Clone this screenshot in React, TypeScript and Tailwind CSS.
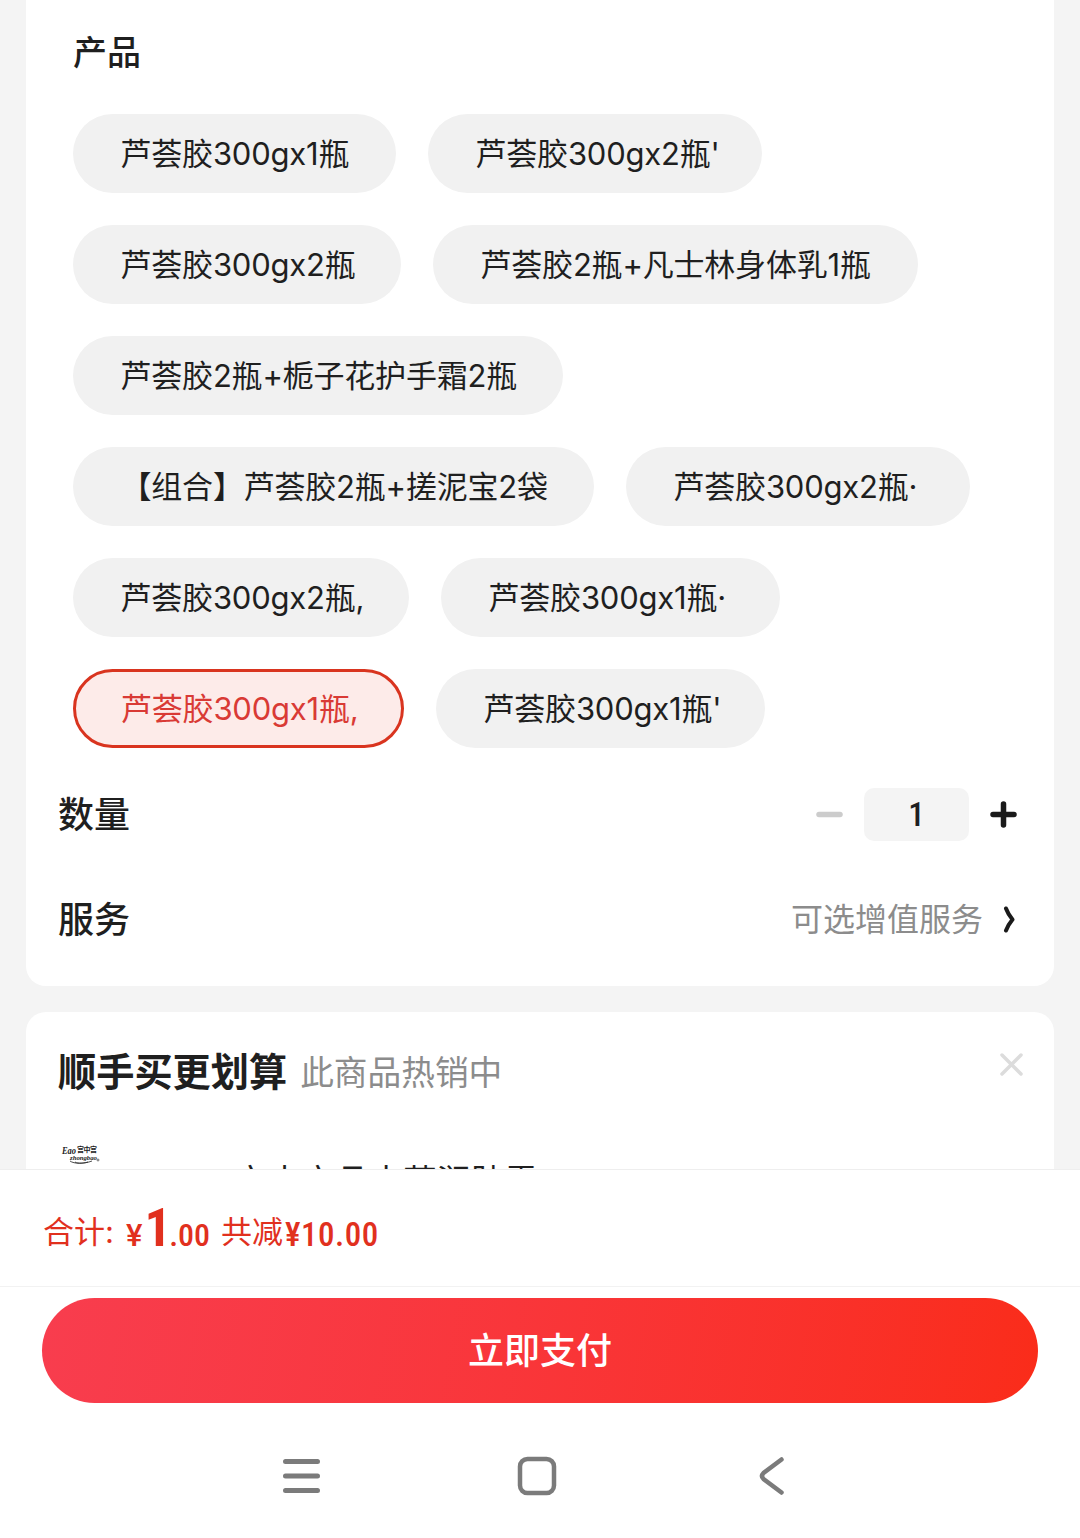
import { useState } from "react";
import { clsx } from "clsx";

type Option = { label: string; width: string };

const rows: Option[][] = [
  [
    { label: "芦荟胶300gx1瓶", width: "w-[323px]" },
    { label: "芦荟胶300gx2瓶'", width: "w-[334px]" },
  ],
  [
    { label: "芦荟胶300gx2瓶", width: "w-[328px]" },
    { label: "芦荟胶2瓶+凡士林身体乳1瓶", width: "w-[485px]" },
  ],
  [{ label: "芦荟胶2瓶+栀子花护手霜2瓶", width: "w-[490px]" }],
  [
    { label: "【组合】芦荟胶2瓶+搓泥宝2袋", width: "w-[521px]" },
    { label: "芦荟胶300gx2瓶·", width: "w-[344px]" },
  ],
  [
    { label: "芦荟胶300gx2瓶,", width: "w-[336px]" },
    { label: "芦荟胶300gx1瓶·", width: "w-[339px]" },
  ],
  [
    { label: "芦荟胶300gx1瓶,", width: "w-[331px]" },
    { label: "芦荟胶300gx1瓶'", width: "w-[329px]" },
  ],
];

const BrandLogo = () => (
  <svg width="42" height="22" viewBox="0 0 42 22" className="ml-[3px] text-[#222]">
    <text x="1" y="10" fontSize="10" fontWeight="700" fontStyle="italic" fontFamily="Liberation Serif, serif" textLength="14" lengthAdjust="spacingAndGlyphs" fill="currentColor">Eao</text>
    <text x="16" y="8" fontSize="7" fontWeight="700" fontFamily="Noto Sans CJK SC, sans-serif" textLength="20" fill="currentColor">宫中宫</text>
    <text x="9" y="16" fontSize="6.5" fontWeight="700" fontStyle="italic" fontFamily="Liberation Serif, serif" textLength="27" lengthAdjust="spacingAndGlyphs" fill="currentColor">zhongbao</text>
    <path d="M9 17c4 3 14 3 22 0M14 18c3 2 10 1 13 0" fill="none" stroke="currentColor" strokeWidth=".8" />
    <circle cx="37" cy="16" r="1" fill="none" stroke="currentColor" strokeWidth=".6" />
  </svg>
);

const App = () => {
  const [selected, setSelected] = useState("芦荟胶300gx1瓶,");
  const [count, setCount] = useState(1);

  return (
    <main className="flex h-[1538px] w-[1080px] flex-col overflow-hidden bg-[#f4f4f4] font-['Inter','Noto_Sans_CJK_SC',sans-serif] text-[#1f1f1f]">
      <div className="flex h-[1169px] shrink-0 flex-col gap-[26px] overflow-hidden px-[26px]">
        {/* 规格 */}
        <section className="h-[986px] shrink-0 rounded-b-[20px] bg-white pt-[29px]">
          <h2 className="pl-[47px] text-[34px] leading-[48px] font-medium">产品</h2>
          <div className="mt-[37px] flex flex-col gap-8 pl-[47px]">
            {rows.map((row, idx) => (
              <div key={idx} className="flex gap-8">
                {row.map((option) => (
                  <button
                    key={option.label}
                    onClick={() => setSelected(option.label)}
                    className={clsx(
                      "flex h-[79px] items-center rounded-full pt-px text-[31px] tracking-[-0.2px] whitespace-nowrap",
                      option.width,
                      selected === option.label ? "border-3 border-[#d9341f] bg-[#fdebe9] pl-[45px] text-[#d93a35]" : "bg-[#f1f1f1] pl-[47.5px]"
                    )}
                  >
                    {option.label}
                  </button>
                ))}
              </div>
            ))}
          </div>

          <div className="mt-[40px] flex h-[53px] items-center justify-between pr-[37px] pl-[32px]">
            <h2 className="pt-0.5 text-[36px] leading-[53px] font-medium">数量</h2>
            <div className="flex items-center">
              <button onClick={() => setCount(Math.max(1, count - 1))} className="mr-[21px]">
                <svg width="27" height="27" viewBox="0 0 27 27" stroke="#ccc" strokeWidth="5.5" strokeLinecap="round">
                  <path d="M3 13.5h21" />
                </svg>
              </button>
              <span className="flex h-[53px] w-[105px] items-center justify-center rounded-[10px] bg-[#f4f4f4] font-['Roboto',sans-serif] text-[33px] font-medium [font-stretch:75%]">{count}</span>
              <button onClick={() => setCount(count + 1)} className="ml-[21px]">
                <svg width="27" height="27" viewBox="0 0 27 27" stroke="#1a1a1a" strokeWidth="5.5" strokeLinecap="round">
                  <path d="M3 13.5h21M13.5 3v21" />
                </svg>
              </button>
            </div>
          </div>

          <div className="mt-[52px] flex h-[53px] items-center justify-between pr-[37px] pl-[32px]">
            <h2 className="pt-0.5 text-[36px] leading-[53px] font-medium">服务</h2>
            <div className="flex items-center gap-[18px] text-[32px] text-[#8c8c8c]">
              可选增值服务
              <svg width="16" height="28" viewBox="0 0 16 28" fill="none" stroke="#1a1a1a" strokeWidth="4" strokeLinecap="round" strokeLinejoin="round">
                <path d="M5 2.5Q7 8 11.5 13.5Q7 19 5 24.5" />
              </svg>
            </div>
          </div>
        </section>

        {/* 顺手买 */}
        <section className="h-[300px] shrink-0 rounded-t-[20px] bg-white px-[32px] pt-[32px]">
          <div className="flex h-[56px] items-center">
            <h2 className="pt-0.5 text-[38.2px] font-bold">顺手买更划算</h2>
            <span className="ml-[13px] pt-0.5 text-[33.7px] text-[#8c8c8c]">此商品热销中</span>
            <svg className="mr-[-1px] mb-[16px] ml-auto" width="23" height="23" viewBox="0 0 23 23" stroke="#dcdcdc" strokeWidth="3.5" strokeLinecap="round">
              <path d="M2 2l19 19M21 2L2 21" />
            </svg>
          </div>
          <div className="mt-[44px] flex">
            <BrandLogo />
            <p className="mt-[14px] ml-[131px] text-[33.8px] leading-[48px] whitespace-nowrap">宫中宫品本草润肤霜</p>
          </div>
        </section>
      </div>

      {/* 底部结算 */}
      <footer className="flex grow flex-col border-t border-[#eee] bg-white">
        <div className="h-[117px] border-b border-[#f2f2f2] pt-[28px] pl-[43px] text-[31px] leading-[60px] text-[#e1301e]">
          <span className="inline-block align-[3px] leading-none">合计:</span>
          <span className="ml-[12px] font-['Roboto',sans-serif] font-medium">¥</span>
          <span className="ml-[2px] font-['Roboto',sans-serif] text-[53px] font-bold [font-stretch:75%]">1</span>
          <span className="ml-[-2px] font-['Roboto',sans-serif] text-[32px] font-medium [font-stretch:75%]">.00</span>
          <span className="ml-[11px] inline-block align-[3px] leading-none">共减</span>
          <span className="ml-[2px] font-['Roboto',sans-serif] text-[33px] font-medium tracking-[0.5px] [font-stretch:75%]">¥10.00</span>
        </div>
        <button className="mx-[42px] mt-[11px] h-[105px] shrink-0 rounded-full bg-linear-100 from-[#f83d4e] to-[#fa2c19] text-[36px] font-medium text-white">
          立即支付
        </button>
        <nav className="mt-[53px] flex items-center pl-[282px]">
          <svg width="38" height="40" viewBox="0 0 38 40" stroke="#7b7b7b" strokeWidth="5" strokeLinecap="round">
            <path d="M3.5 5.5h32M3.5 20h32M3.5 34.5h32" />
          </svg>
          <svg className="ml-[197px]" width="40" height="40" viewBox="0 0 40 40" fill="none" stroke="#7b7b7b" strokeWidth="4.5">
            <rect x="3" y="3" width="34" height="34" rx="7.5" />
          </svg>
          <svg className="ml-[201px]" width="28" height="40" viewBox="0 0 28 40" fill="none" stroke="#7b7b7b" strokeWidth="4.5" strokeLinecap="round">
            <path d="M23.5 3.5L5.5 17Q2.5 20 5.5 23L23.5 36.5" />
          </svg>
        </nav>
      </footer>
    </main>
  );
};

export default App;
